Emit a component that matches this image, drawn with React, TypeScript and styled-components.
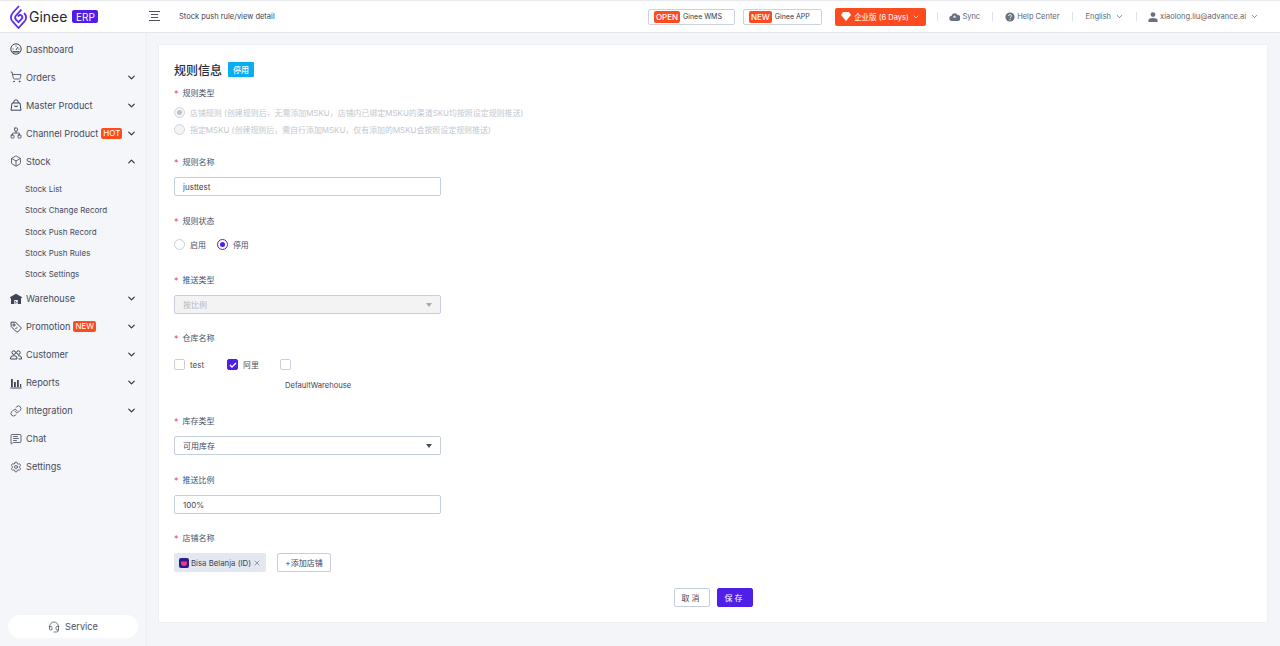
import { FC, ReactNode } from 'react';
import styled, { createGlobalStyle } from 'styled-components';
import {
  Box,
  ChevronDown,
  ChevronUp,
  Headset,
  Link,
  MessageSquareText,
  Network,
  Settings,
  ShoppingCart,
  X,
} from 'lucide-react';

const FONT = `Inter, "Noto Sans CJK SC", sans-serif`;

const GlobalStyle = createGlobalStyle`
  html, body { margin: 0; padding: 0; height: 100%; overflow: hidden; }
  body { font-family: ${FONT}; font-size: 8px; color: #3c4254; background: #f4f5f8; }
  * { box-sizing: border-box; }
`;

const Page = styled.div`
  width: 1280px;
  height: 646px;
  display: flex;
  flex-direction: column;
`;

const Header = styled.header`
  height: 33px;
  flex: none;
  display: flex;
  align-items: center;
  background: #fff;
  border-top: 1px solid #e8e9ec;
  border-bottom: 1px solid #e4e6ea;
`;

const LogoBox = styled.div`
  width: 146px;
  padding-left: 10px;
  display: flex;
  align-items: center;
`;

const LogoText = styled.span`
  font-size: 14px;
  color: #23262f;
  margin-left: 2px;
`;

const ErpBadge = styled.span`
  margin-left: 5px;
  width: 26px;
  height: 13px;
  border-radius: 2px;
  background: #4f1fe8;
  color: #fff;
  font-size: 10px;
  display: flex;
  align-items: center;
  justify-content: center;
`;

const MenuToggle = styled.svg`
  width: 11px;
  height: 11px;
  margin-left: 3px;
`;

const Crumb = styled.span`
  margin-left: 19px;
  font-size: 7.5px;
  color: #3c4254;
`;

const HeaderRight = styled.div`
  margin-left: auto;
  display: flex;
  align-items: center;
  padding-right: 21px;
`;

const OutlineLink = styled.div<{ $width: number }>`
  width: ${(p) => p.$width}px;
  height: 16px;
  padding-left: 5px;
  margin-right: 8px;
  border: 1px solid #ccd3e0;
  border-radius: 2px;
  display: flex;
  align-items: center;
  gap: 3px;
  font-size: 7px;
  color: #333846;
  white-space: nowrap;
`;

const LinkFlag = styled.span`
  background: #fc4c1f;
  color: #fff;
  border-radius: 2px;
  font-size: 8px;
  font-weight: 500;
  line-height: 12px;
  padding: 0 2px;
`;

const PlanButton = styled.div`
  height: 18px;
  width: 91px;
  margin-left: 5px;
  background: #fc4c1f;
  color: #fff;
  border-radius: 2px;
  font-size: 7.5px;
  display: flex;
  align-items: center;
  justify-content: center;
  gap: 3px;
  white-space: nowrap;
`;

const NavText = styled.span`
  display: flex;
  align-items: center;
  gap: 2px;
  font-size: 7.5px;
  color: #5d6474;
  white-space: nowrap;
`;

const Divider = styled.i<{ $space: number }>`
  width: 1px;
  height: 9px;
  background: #dfe2e8;
  margin: 0 ${(p) => p.$space}px;
`;

const Body = styled.div`
  flex: 1;
  display: flex;
  min-height: 0;
`;

const Sidebar = styled.aside`
  width: 147px;
  flex: none;
  display: flex;
  flex-direction: column;
  padding-top: 2px;
  background: #f5f6f9;
  border-right: 1px solid #eceef2;
`;

const NavRow = styled.div`
  height: 28px;
  flex: none;
  display: flex;
  align-items: center;
  padding: 0 9px 0 10px;
  font-size: 9.2px;
  color: #454b5e;
  white-space: nowrap;
  svg.lead { width: 12px; height: 12px; margin-right: 4px; color: #3f4557; flex: none; }
`;

const NavFlag = styled.span`
  margin-left: 3px;
  background: #fc4c1f;
  color: #fff;
  border-radius: 2px;
  font-size: 8px;
  line-height: 11px;
  padding: 0 2px;
`;

const Caret = styled.span`
  margin-left: auto;
  display: flex;
  color: #2f3442;
`;

const SubList = styled.div`
  display: flex;
  flex-direction: column;
  padding-top: 3.5px;
`;

const SubRow = styled.div`
  height: 21.25px;
  padding-left: 25px;
  display: flex;
  align-items: center;
  font-size: 8px;
  color: #454b5e;
`;

const ServicePill = styled.div`
  margin: auto 8px 8px;
  height: 23px;
  border-radius: 12px;
  background: #fff;
  display: flex;
  align-items: center;
  justify-content: center;
  gap: 5px;
  font-size: 9.2px;
  color: #4b5162;
`;

const Main = styled.main`
  flex: 1;
  padding: 11px 12px 23px 11px;
`;

const Card = styled.section`
  height: 100%;
  background: #fff;
  border: 1px solid #eff0f3;
  padding: 16px 15px 0;
  display: flex;
  flex-direction: column;
`;

const TitleRow = styled.div`
  height: 16px;
  display: flex;
  align-items: center;
  gap: 6px;
  margin-bottom: 9px;
`;

const Title = styled.h1`
  margin: 0;
  font-size: 12px;
  font-weight: 500;
  color: #2a2e3a;
`;

const StatusBadge = styled.span`
  width: 26px;
  height: 15px;
  border-radius: 1px;
  background: #06aef2;
  color: #fff;
  font-size: 8px;
  font-weight: 500;
  display: flex;
  align-items: center;
  justify-content: center;
`;

const Field = styled.div<{ $height: number }>`
  height: ${(p) => p.$height}px;
  flex: none;
`;

const Label = styled.div`
  height: 12px;
  display: flex;
  align-items: center;
  font-size: 8px;
  color: #4a5060;
  margin-bottom: 10px;
  &::before {
    content: '*';
    color: #f5434f;
    margin: 2px 4px 0 0;
    font-size: 9px;
  }
`;

const RadioColumn = styled.div`
  display: flex;
  flex-direction: column;
  gap: 6px;
  margin-top: -1px;
`;

const RadioRow = styled.div`
  display: flex;
  align-items: center;
  gap: 11px;
  padding-top: 3px;
`;

const RadioItem = styled.label<{ $disabled?: boolean }>`
  display: flex;
  align-items: center;
  gap: 5px;
  height: 11px;
  font-size: 7.95px;
  color: ${(p) => (p.$disabled ? '#c4c7cd' : '#4a5060')};
  white-space: nowrap;
`;

const RadioDot = styled.span<{ $checked?: boolean; $disabled?: boolean }>`
  width: 11px;
  height: 11px;
  border-radius: 50%;
  flex: none;
  display: flex;
  align-items: center;
  justify-content: center;
  background: ${(p) => (p.$disabled ? '#f3f4f6' : '#fff')};
  border: 1px solid ${(p) => (p.$disabled ? '#cfd4e0' : p.$checked ? '#4f1fe8' : '#c8cfdd')};
  &::after {
    content: '';
    display: ${(p) => (p.$checked ? 'block' : 'none')};
    width: 5px;
    height: 5px;
    border-radius: 50%;
    background: ${(p) => (p.$disabled ? '#bfc2c8' : '#4f1fe8')};
  }
`;

const InputBox = styled.div<{ $disabled?: boolean }>`
  width: 267px;
  height: 19px;
  border: 1px solid #c5cedd;
  border-radius: 2px;
  background: ${(p) => (p.$disabled ? '#f3f3f4' : '#fff')};
  color: ${(p) => (p.$disabled ? '#b5b8be' : '#3f4555')};
  display: flex;
  align-items: center;
  padding: 0 8px;
  font-size: 8px;
`;

const SelectArrow = styled.span<{ $disabled?: boolean }>`
  margin-left: auto;
  width: 0;
  height: 0;
  border-left: 3px solid transparent;
  border-right: 3px solid transparent;
  border-top: 4px solid ${(p) => (p.$disabled ? '#a5a8ae' : '#4a4f5c')};
`;

const CheckGrid = styled.div`
  display: flex;
  align-items: flex-start;
  padding-top: 6px;
`;

const CheckItem = styled.div<{ $width: number }>`
  width: ${(p) => p.$width}px;
  display: flex;
  align-items: center;
  gap: 5px;
  height: 11px;
  font-size: 8px;
  color: #4a5060;
`;

const CheckBox = styled.span<{ $checked?: boolean }>`
  width: 11px;
  height: 11px;
  flex: none;
  border-radius: 2px;
  display: flex;
  align-items: center;
  justify-content: center;
  background: ${(p) => (p.$checked ? '#4f1fe8' : '#fff')};
  border: 1px solid ${(p) => (p.$checked ? '#4f1fe8' : '#c8cfdd')};
`;

const CheckStack = styled.div`
  display: flex;
  flex-direction: column;
`;

const WarehouseName = styled.span`
  margin: 11px 0 0 5px;
  font-size: 7.6px;
  color: #3f4555;
`;

const ShopRow = styled.div`
  display: flex;
  align-items: center;
  gap: 11px;
`;

const ShopTag = styled.div`
  height: 19px;
  width: 92px;
  border-radius: 2px;
  background: #e2e7f0;
  display: flex;
  align-items: center;
  padding-left: 5px;
  gap: 2px;
  font-size: 7.8px;
  color: #3f4555;
  white-space: nowrap;
  svg { flex: none; }
`;

const ShopIcon = styled.svg`
  width: 10px;
  height: 10px;
  flex: none;
`;

const Button = styled.button<{ $primary?: boolean }>`
  height: 19px;
  font-family: inherit;
  font-size: 8px;
  padding: 0;
  border-radius: 2px;
  border: 1px solid ${(p) => (p.$primary ? '#4f1fe8' : '#c5cedd')};
  background: ${(p) => (p.$primary ? '#4f1fe8' : '#fff')};
  color: ${(p) => (p.$primary ? '#fff' : '#3f4555')};
`;

const AddButton = styled(Button)`
  width: 54px;
`;

const ActionButton = styled(Button)`
  width: 36px;
  letter-spacing: 2px;
`;

const Actions = styled.div`
  display: flex;
  justify-content: center;
  gap: 7px;
`;

const Logo: FC = () => (
  <svg width="17" height="24" viewBox="0 0 17 24" fill="none" stroke="#5a2ff0" strokeWidth="1.8">
    <path d="M9 1 L3 7.5 Q0.9 10 0.9 12.5 Q0.9 15 3 17 L8.5 23 L14 17 Q16.1 15 16.1 12.5 Q16.1 10 14 8" />
    <path d="M11.4 4.6 L6 10.5 Q4.2 12.5 6 14.6 L8.5 17.2 L11.6 14 Q13.2 12.2 11.6 10.6 Q10 9.2 8.4 10.8 L7.8 11.5" />
  </svg>
);

const DashboardIcon: FC = () => (
  <svg className="lead" viewBox="0 0 12 12" fill="none" stroke="currentColor" strokeWidth="1">
    <circle cx="6" cy="6" r="5.2" />
    <path d="M2.5 8.8h7" strokeWidth="1.4" />
    <path d="M6 7l2-3M2.6 6h1M8.4 6h1M6 2.6v1" />
  </svg>
);

const BagIcon: FC = () => (
  <svg className="lead" viewBox="0 0 12 12" fill="none" stroke="currentColor" strokeWidth="1">
    <path d="M2 4h8l1 7.2H1z" />
    <path d="M3.8 4V3a2.2 2.2 0 0 1 4.4 0v1" />
    <path d="M4 6.8q2 1.6 4 0" />
  </svg>
);

const WarehouseIcon: FC = () => (
  <svg className="lead" viewBox="0 0 12 12" fill="currentColor">
    <path d="M6 .8 11.8 4v1.2H11V11H7.8V7H4.2v4H1V5.2H.2V4z" />
    <path d="M4.8 8h1v1h-1zM6.3 9.2h1v1h-1zM4.8 9.6h1v1h-1z" />
  </svg>
);

const PromoIcon: FC = () => (
  <svg className="lead" viewBox="0 0 12 12" fill="none" stroke="currentColor" strokeWidth="1">
    <path d="M1 1.2h4.6l5.2 5.2a1 1 0 0 1 0 1.4l-3 3a1 1 0 0 1-1.4 0L1.2 5.6z" />
    <circle cx="4" cy="4" r="1.1" />
    <path d="M5.4 7.6l2-1" />
  </svg>
);

const CustomerIcon: FC = () => (
  <svg className="lead" viewBox="0 0 12 12" fill="none" stroke="currentColor" strokeWidth="1">
    <circle cx="3.8" cy="3.6" r="1.8" />
    <circle cx="8.4" cy="3.6" r="1.8" />
    <path d="M.6 10V9a2.4 2.4 0 0 1 2.4-2.2h1.6A2.4 2.4 0 0 1 7 9v1zM8 6.8h1.2A2.3 2.3 0 0 1 11.5 9v1H8.6" />
  </svg>
);

const ReportsIcon: FC = () => (
  <svg className="lead" viewBox="0 0 12 12" fill="currentColor">
    <path d="M1 2h1.8v8H1zM4 5h1.8v5H4zM7 3h1.8v7H7zM10 7h1.2v3H10zM.4 10.6h11.2v.8H.4z" />
  </svg>
);

type NavItem = {
  label: string;
  icon: ReactNode;
  caret?: 'up' | 'down';
  flag?: string;
};

const lead = { className: 'lead', strokeWidth: 1.6 };

const topNav: NavItem[] = [
  { label: 'Dashboard', icon: <DashboardIcon /> },
  { label: 'Orders', icon: <ShoppingCart {...lead} />, caret: 'down' },
  { label: 'Master Product', icon: <BagIcon />, caret: 'down' },
  { label: 'Channel Product', icon: <Network {...lead} />, caret: 'down', flag: 'HOT' },
  { label: 'Stock', icon: <Box {...lead} />, caret: 'up' },
];

const stockNav = ['Stock List', 'Stock Change Record', 'Stock Push Record', 'Stock Push Rules', 'Stock Settings'];

const bottomNav: NavItem[] = [
  { label: 'Warehouse', icon: <WarehouseIcon />, caret: 'down' },
  { label: 'Promotion', icon: <PromoIcon />, caret: 'down', flag: 'NEW' },
  { label: 'Customer', icon: <CustomerIcon />, caret: 'down' },
  { label: 'Reports', icon: <ReportsIcon />, caret: 'down' },
  { label: 'Integration', icon: <Link {...lead} />, caret: 'down' },
  { label: 'Chat', icon: <MessageSquareText {...lead} /> },
  { label: 'Settings', icon: <Settings {...lead} /> },
];

const renderNav = (item: NavItem) => (
  <NavRow key={item.label}>
    {item.icon}
    {item.label}
    {item.flag && <NavFlag>{item.flag}</NavFlag>}
    {item.caret && (
      <Caret>
        {item.caret === 'up' ? <ChevronUp size={11} strokeWidth={2.6} /> : <ChevronDown size={11} strokeWidth={2.6} />}
      </Caret>
    )}
  </NavRow>
);

const App: FC = () => (
  <Page>
    <GlobalStyle />
    <Header>
      <LogoBox>
        <Logo />
        <LogoText>Ginee</LogoText>
        <ErpBadge>ERP</ErpBadge>
      </LogoBox>
      <MenuToggle viewBox="0 0 11 11" stroke="#4a5060" strokeWidth="1">
        <path d="M0 .5h11M2 3.5h7M2 6.5h7M0 9.5h11" />
      </MenuToggle>
      <Crumb>Stock push rule/view detail</Crumb>
      <HeaderRight>
        <OutlineLink $width={87}>
          <LinkFlag>OPEN</LinkFlag>Ginee WMS
        </OutlineLink>
        <OutlineLink $width={79}>
          <LinkFlag>NEW</LinkFlag>Ginee APP
        </OutlineLink>
        <PlanButton>
          <svg width="10" height="9" viewBox="0 0 10 9" fill="#fff">
            <path d="M2 0h6l2 3-5 6-5-6z" />
          </svg>
          企业版 (6 Days)
          <ChevronDown size={8} />
        </PlanButton>
        <Divider $space={11.25} />
        <NavText>
          <svg width="11" height="9" viewBox="0 0 11 9" fill="#6b7180">
            <path d="M3 9a2.6 2.6 0 0 1-.4-5.2A3.2 3.2 0 0 1 8.6 3 3 3 0 0 1 8.4 9z" />
            <path d="M5.5 3.2 3.8 5.4h3.4z" fill="#fff" />
          </svg>
          Sync
        </NavText>
        <Divider $space={12} />
        <NavText>
          <svg width="10" height="10" viewBox="0 0 10 10">
            <circle cx="5" cy="5" r="4.6" fill="#6b7180" />
            <path d="M3.6 3.9a1.4 1.4 0 1 1 2 1.3c-.4.2-.6.5-.6 1" stroke="#fff" fill="none" />
            <circle cx="5" cy="7.6" r=".6" fill="#fff" />
          </svg>
          Help Center
        </NavText>
        <Divider $space={12.5} />
        <NavText>
          English
          <ChevronDown size={9} style={{ marginLeft: 2 }} />
        </NavText>
        <Divider $space={11.5} />
        <NavText>
          <svg width="10" height="10" viewBox="0 0 10 10" fill="#6b7180">
            <circle cx="5" cy="2.6" r="2.4" />
            <path d="M.4 10V8.4C.4 6.8 2.4 6 5 6s4.6.8 4.6 2.4V10z" />
          </svg>
          xiaolong.liu@advance.ai
          <ChevronDown size={9} style={{ marginLeft: 2 }} />
        </NavText>
      </HeaderRight>
    </Header>
    <Body>
      <Sidebar>
        {topNav.map(renderNav)}
        <SubList>
          {stockNav.map((label) => (
            <SubRow key={label}>{label}</SubRow>
          ))}
        </SubList>
        {bottomNav.map(renderNav)}
        <ServicePill>
          <Headset size={12} strokeWidth={1.5} />
          Service
        </ServicePill>
      </Sidebar>
      <Main>
        <Card>
          <TitleRow>
            <Title>规则信息</Title>
            <StatusBadge>停用</StatusBadge>
          </TitleRow>
          <Field $height={69}>
            <Label>规则类型</Label>
            <RadioColumn>
              <RadioItem $disabled>
                <RadioDot $checked $disabled />
                店铺规则 (创建规则后，无需添加MSKU，店铺内已绑定MSKU的渠道SKU均按照设定规则推送)
              </RadioItem>
              <RadioItem $disabled>
                <RadioDot $disabled />
                指定MSKU (创建规则后，需自行添加MSKU，仅有添加的MSKU会按照设定规则推送)
              </RadioItem>
            </RadioColumn>
          </Field>
          <Field $height={59}>
            <Label>规则名称</Label>
            <InputBox>justtest</InputBox>
          </Field>
          <Field $height={59}>
            <Label>规则状态</Label>
            <RadioRow>
              <RadioItem>
                <RadioDot />
                启用
              </RadioItem>
              <RadioItem>
                <RadioDot $checked />
                停用
              </RadioItem>
            </RadioRow>
          </Field>
          <Field $height={58}>
            <Label>推送类型</Label>
            <InputBox $disabled>
              按比例
              <SelectArrow $disabled />
            </InputBox>
          </Field>
          <Field $height={83}>
            <Label>仓库名称</Label>
            <CheckGrid>
              <CheckItem $width={53}>
                <CheckBox />
                test
              </CheckItem>
              <CheckItem $width={53}>
                <CheckBox $checked>
                  <svg width="8" height="8" viewBox="0 0 8 8" fill="none" stroke="#fff" strokeWidth="1.4">
                    <path d="M1 4l2 2 4-4" />
                  </svg>
                </CheckBox>
                阿里
              </CheckItem>
              <CheckStack>
                <CheckBox />
                <WarehouseName>DefaultWarehouse</WarehouseName>
              </CheckStack>
            </CheckGrid>
          </Field>
          <Field $height={59}>
            <Label>库存类型</Label>
            <InputBox>
              可用库存
              <SelectArrow />
            </InputBox>
          </Field>
          <Field $height={58}>
            <Label>推送比例</Label>
            <InputBox>100%</InputBox>
          </Field>
          <Field $height={57}>
            <Label>店铺名称</Label>
            <ShopRow>
              <ShopTag>
                <ShopIcon viewBox="0 0 10 10">
                  <rect width="10" height="10" rx="2" fill="#2a1a8c" />
                  <path d="M2 3.5h6v1.5Q8 8 5 8T2 5z" fill="#f0398c" />
                </ShopIcon>
                Bisa Belanja (ID)
                <X size={8} color="#6b7180" />
              </ShopTag>
              <AddButton>+添加店铺</AddButton>
            </ShopRow>
          </Field>
          <Actions>
            <ActionButton>取消</ActionButton>
            <ActionButton $primary>保存</ActionButton>
          </Actions>
        </Card>
      </Main>
    </Body>
  </Page>
);

export default App;
